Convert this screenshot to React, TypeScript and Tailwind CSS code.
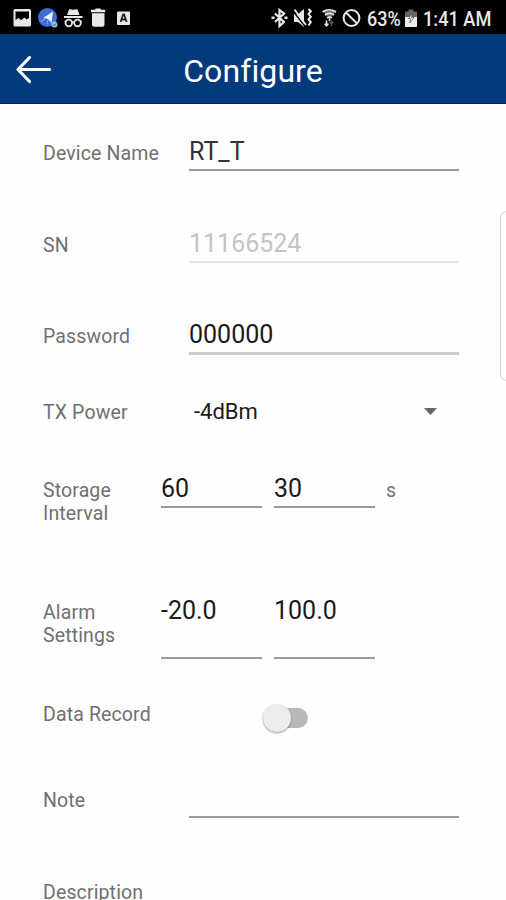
import type { ReactNode } from "react"
import clsx from "clsx"

function StatusBar() {
  return (
    <div className="flex h-[34px] shrink-0 items-center bg-black text-[#e8e8e8]">
      <svg width="140" height="34" viewBox="0 0 140 34" fill="currentColor">
        {/* gallery */}
        <path
          fillRule="evenodd"
          d="M15 9h14.500a1.500 1.500 0 0 1 1.500 1.500v14.500a1.500 1.500 0 0 1-1.500 1.500h-14.500a1.500 1.500 0 0 1-1.500-1.500V10.500A1.500 1.500 0 0 1 15 9ZM15.500 11.500v8.500l3-2 2.500 2.200 3.500-2.700 2 2 2.500-1.500v-6.500Z"
        />
        {/* location app */}
        <circle cx="47.500" cy="17.500" r="9.500" fill="#3f6fd3" />
        <path d="M53 11.500 43 18l5 1 3.500 4Z" fill="#eef3ff" />
        <path d="m41 22 5-4M47 24l1-4" stroke="#7f9fe5" strokeWidth="1.200" />
        <circle cx="54.500" cy="24.500" r="3" fill="#8fc3e8" />
        <path d="m53 24.500 1.200 1.200 2-2.400" fill="none" stroke="#2b5c9c" />
        {/* incognito */}
        <path d="M69 9.500c1.500-.8 2.500.3 4.200.3s2.800-1.100 4.300-.3l2 5.500H67Z" />
        <path d="M64 16h18.500v2H64Z" />
        <g fill="none" stroke="currentColor" strokeWidth="1.700">
          <circle cx="68.800" cy="23" r="3.300" />
          <circle cx="77.500" cy="23" r="3.300" />
          <path d="M72 22.500q1.100-.9 2.200 0M64.500 21.500h1.500M80 21.500h2" />
        </g>
        {/* trash */}
        <path d="M91 9.800h3.800l1-1.300h4.500l1 1.300h3.900v2.400H91ZM92 13.200h12.500v11.500a2 2 0 0 1-2 2h-8.500a2 2 0 0 1-2-2Z" />
        {/* keyboard */}
        <rect x="117" y="11.500" width="13" height="13.500" rx="1" />
        <path
          d="m120.500 22 2.700-7.500h.8l2.700 7.500M121.500 19.500h4.200"
          fill="none"
          stroke="#222"
          strokeWidth="1.800"
        />
      </svg>
      <svg
        className="ml-[130px]"
        width="97"
        height="34"
        viewBox="270 0 97 34"
        fill="none"
        stroke="currentColor"
        strokeWidth="2.200"
      >
        {/* bluetooth */}
        <path d="m275 13.500 9 8.500-4.500 4V10l4.500 3.500-9 8.500" />
        <path d="M271.500 17.800h3M284.500 17.800h3" strokeWidth="2.400" />
        {/* sound off, vibrate */}
        <path d="M294 14h4l6-5v18l-6-5h-4Z" fill="currentColor" stroke="none" />
        <path d="m293 11 12 15.500" stroke="#000" strokeWidth="1.300" />
        <path d="m294.500 9.500 11.500 15.500" strokeWidth="1.800" />
        <path d="m308.500 9 2.300 2.300-2.300 2.700 2.300 2.700-2.300 2.700 2.300 2.700-2.300 3.400" strokeWidth="2" />
        {/* wifi */}
        <path d="M322.500 10.500h14l-7 8.500Z" fill="#777" stroke="none" />
        <g strokeWidth="1.600">
          <path d="M322.500 12q6.500-4.500 13.500 0M325 15q4.500-3.500 9 0M327 18q2.500-2 5 0" />
          <path d="M329.500 18v3" />
        </g>
        <path d="M326.500 20.500v5m-1.800-1.800 1.800 2 1.800-2" strokeWidth="1.600" />
        <path d="M331.500 26v-4.500m-1.800 1.800 1.800-2 1.800 2" stroke="#555" strokeWidth="1.400" />
        {/* no data */}
        <circle cx="351.500" cy="18" r="7.900" strokeWidth="2" />
        <path d="m346 12.500 11 11" strokeWidth="2" />
      </svg>
      <span className="mt-[4px] w-[37px] origin-left scale-x-[0.9] text-[20px] leading-none font-medium whitespace-nowrap">
        63%
      </span>
      <svg width="14" height="34" viewBox="404 0 14 34">
        <path d="M405 11.500h3.500V9.500h5v2h3.500v14.500a1 1 0 0 1-1 1h-10a1 1 0 0 1-1-1Z" fill="#666" />
        <path d="M405 17h12v9a1 1 0 0 1-1 1h-10a1 1 0 0 1-1-1Z" fill="#eee" />
        <path d="m412.500 13-4 5.500h2.300l-1 4.500 4.200-5.500h-2.500Z" fill="#fff" stroke="#444" strokeWidth=".7" />
      </svg>
      <span className="mt-[4px] ml-[5px] origin-left scale-x-[0.91] text-[20px] leading-none font-medium whitespace-nowrap">
        1:41 AM
      </span>
    </div>
  )
}

function Header() {
  return (
    <header className="grid h-[70px] shrink-0 grid-cols-[1fr_auto_1fr] items-center border-b border-[#0b1d6b] bg-[#023a7c] text-white">
      <svg
        className="ml-[14px]"
        width="40"
        height="34"
        viewBox="0 0 40 34"
        fill="none"
        stroke="currentColor"
        strokeWidth="3.200"
        strokeLinecap="round"
        strokeLinejoin="round"
      >
        <path d="M35.500 17.500H4M15.500 5.500 4 17.500l11.500 12" />
      </svg>
      <h1 className="pt-[4px] text-[32px] leading-none tracking-[0.1px]">Configure</h1>
    </header>
  )
}

function Row({
  label,
  className,
  labelClass,
  children,
}: {
  label: string
  className: string
  labelClass?: string
  children?: ReactNode
}) {
  return (
    <div className={clsx("flex shrink-0 items-start pl-[43px]", className)}>
      <div
        className={clsx(
          "shrink-0 pt-[5px] text-[19.5px] leading-[23px] tracking-[0.13px] whitespace-nowrap text-[#707070]",
          labelClass ?? "w-[146px]"
        )}
      >
        {label}
      </div>
      {children}
    </div>
  )
}

function Field({ value, className }: { value?: string; className: string }) {
  return (
    <div className={clsx("text-[25px] leading-[29px]", className)}>
      {value}
    </div>
  )
}

export default function App() {
  return (
    <div className="relative flex h-[900px] w-[506px] flex-col overflow-hidden bg-[#fefefe] font-[Roboto,sans-serif] text-[#1a1a1a]">
      <StatusBar />
      <Header />
      <main className="flex flex-col">
        <Row label="Device Name" className="h-[92px] pt-[33px]">
          <Field value="RT_T" className="h-[34px] w-[270px] border-b-2 border-[#999] text-[#333]" />
        </Row>
        <Row label="SN" className="h-[92px] pt-[33px]">
          <Field value="11166524" className="h-[34px] w-[270px] border-b-2 border-[#e6e6e6] text-[#c4c4c4]" />
        </Row>
        <Row label="Password" className="h-[76px] pt-[32px]">
          <Field value="000000" className="h-[35px] w-[270px] border-b-3 border-[#cbcbcb]" />
        </Row>
        <Row label="TX Power" className="h-[78px] pt-[32px]">
          <div className="mt-[3px] flex w-[248px] items-center justify-between pl-[5px] text-[22px] leading-[26px]">
            -4dBm
            <svg className="-mt-[2px]" width="13" height="7" viewBox="0 0 13 7" fill="#666">
              <path d="M0 0h13L6.500 7Z" />
            </svg>
          </div>
        </Row>
        <Row label="Storage Interval" className="h-[122px] pt-[32px]" labelClass="h-[46px] w-[118px] overflow-hidden pr-6 !whitespace-normal">
          <Field value="60" className="h-[34px] w-[101px] border-b-2 border-[#999]" />
          <Field value="30" className="ml-[12px] h-[34px] w-[101px] border-b-2 border-[#999]" />
          <span className="mt-[5px] ml-[11px] text-[19.5px] leading-[23px] text-[#707070]">s</span>
        </Row>
        <Row label="Alarm Settings" className="h-[102px] pt-[32px]" labelClass="w-[118px] pr-6 !whitespace-normal">
          <Field value="-20.0" className="h-[63px] w-[101px] border-b-2 border-[#999]" />
          <Field value="100.0" className="ml-[12px] h-[63px] w-[101px] border-b-2 border-[#999]" />
        </Row>
        <Row label="Data Record" className="h-[86px] pt-[32px]">
          <div className="mt-[5px] ml-[74px] flex h-[29px] items-center">
            <span className="z-10 size-[28px] rounded-full bg-[#ececec] shadow-[0_1px_2px_rgba(0,0,0,0.4)]" />
            <span className="-ml-[14px] h-[20px] w-[31px] rounded-full bg-[#b9b9b9]" />
          </div>
        </Row>
        <Row label="Note" className="h-[92px] pt-[32px]">
          <Field className="h-[34px] w-[270px] border-b-2 border-[#999]" />
        </Row>
        <Row label="Description" className="h-[60px] pt-[32px]" />
      </main>
      {/* edge panel handle */}
      <div className="absolute top-[211px] -right-[6px] h-[170px] w-[12px] rounded-l-[7px] border border-[#d2d2d2] bg-white" />
    </div>
  )
}
